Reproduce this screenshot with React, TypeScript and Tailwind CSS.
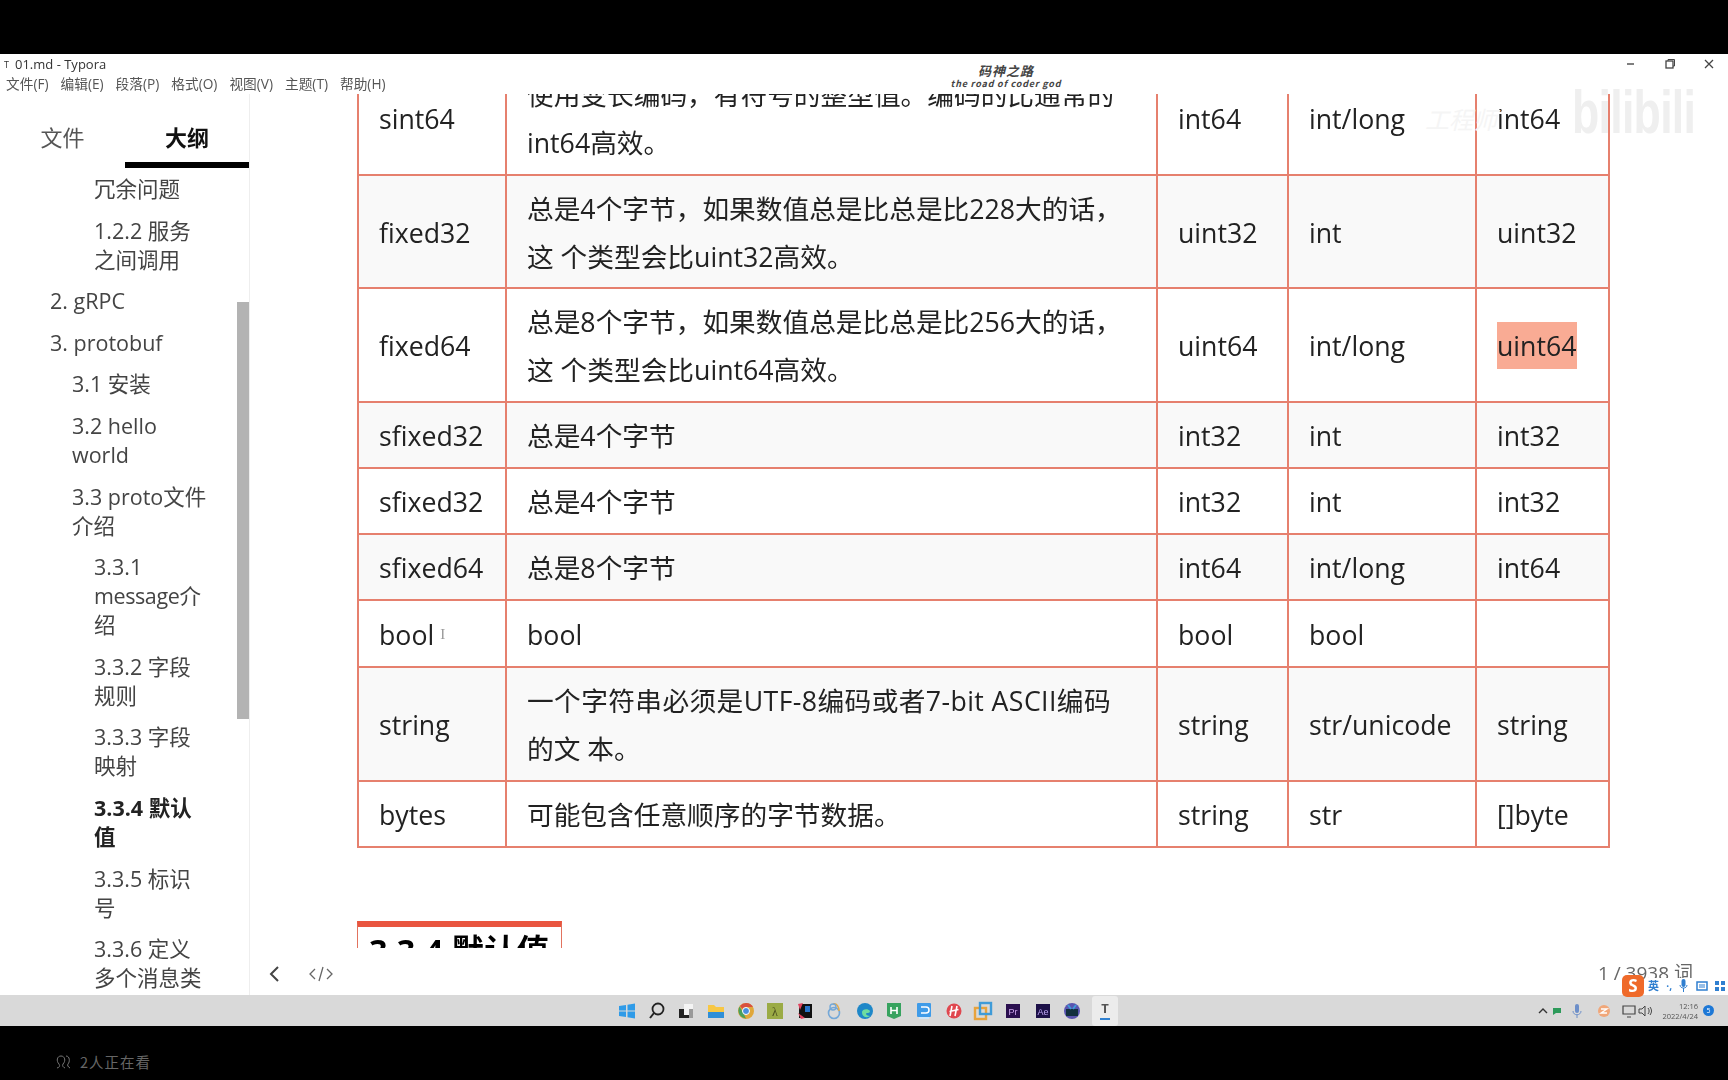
import React from "react";

const ff = "font-['Open_Sans','Noto_Sans_CJK_SC',sans-serif]";

type Row = { c: React.ReactNode[]; h: string };
const rows: Row[] = [
  { h: "h-[114px]", c: ["sint64", <>使用变长编码，有符号的整型值。编码的比通常的<br />int64高效。</>, "int64", "int/long", "int64"] },
  { h: "h-[113px]", c: ["fixed32", <>总是4个字节，如果数值总是比总是比228大的话，<br />这 个类型会比uint32高效。</>, "uint32", "int", "uint32"] },
  { h: "h-[114px]", c: ["fixed64", <>总是8个字节，如果数值总是比总是比256大的话，<br />这 个类型会比uint64高效。</>, "uint64", "int/long", <span className="inline-block bg-[#f9ab94] leading-[47px]">uint64</span>] },
  { h: "h-[66px]", c: ["sfixed32", "总是4个字节", "int32", "int", "int32"] },
  { h: "h-[66px]", c: ["sfixed32", "总是4个字节", "int32", "int", "int32"] },
  { h: "h-[66px]", c: ["sfixed64", "总是8个字节", "int64", "int/long", "int64"] },
  { h: "h-[67px]", c: ["bool", "bool", "bool", "bool", ""] },
  { h: "h-[114px]", c: ["string", <><span className="tracking-[0.4px]">一个字符串必须是UTF-8编码或者7-bit ASCII编码</span><br />的文 本。</>, "string", "str/unicode", "string"] },
  { h: "h-[66px]", c: ["bytes", "可能包含任意顺序的字节数据。", "string", "str", "[]byte"] },
];

const outline: { t: React.ReactNode; pl: string; bold?: boolean }[] = [
  { t: "冗余问题", pl: "pl-[94px]" },
  { t: <>1.2.2 服务<br />之间调用</>, pl: "pl-[94px]" },
  { t: "2. gRPC", pl: "pl-[50px]" },
  { t: "3. protobuf", pl: "pl-[50px]" },
  { t: "3.1 安装", pl: "pl-[72px]" },
  { t: <>3.2 hello<br />world</>, pl: "pl-[72px]" },
  { t: <>3.3 proto文件<br />介绍</>, pl: "pl-[72px]" },
  { t: <>3.3.1<br /><span className="tracking-[-0.4px]">message</span>介<br />绍</>, pl: "pl-[94px]" },
  { t: <>3.3.2 字段<br />规则</>, pl: "pl-[94px]" },
  { t: <>3.3.3 字段<br />映射</>, pl: "pl-[94px]" },
  { t: <>3.3.4 默认<br />值</>, pl: "pl-[94px]", bold: true },
  { t: <>3.3.5 标识<br />号</>, pl: "pl-[94px]" },
  { t: <>3.3.6 定义<br />多个消息类</>, pl: "pl-[94px]" },
];

const menu = ["文件(F)", "编辑(E)", "段落(P)", "格式(O)", "视图(V)", "主题(T)", "帮助(H)"];

const Ico = ({ children }: { children: React.ReactNode }) => (
  <svg width="20" height="20" viewBox="0 0 20 20" className="shrink-0">{children}</svg>
);

const taskIcons: React.ReactNode[] = [
  <Ico key="win"><path d="M2 5l7-1v5.5H2zM10.500 3.800L18 2.500v7h-7.500zM2 10.500h7V16l-7-1zM10.500 10.500H18v7l-7.500-1.200z" fill="#2f9be8" /></Ico>,
  <Ico key="search"><circle cx="11" cy="8" r="5.500" fill="none" stroke="#222" strokeWidth="1.800" /><path d="M7 12l-4 5" stroke="#222" strokeWidth="2" /></Ico>,
  <Ico key="view"><rect x="3" y="8" width="10" height="9" fill="#222" /><rect x="8" y="3" width="9" height="11" fill="#f4f4f4" /><rect x="13" y="8" width="4" height="9" fill="#999" /></Ico>,
  <Ico key="files"><path d="M2 4h6l2 2h8v11H2z" fill="#f7c744" /><rect x="2" y="11" width="16" height="6" fill="#2f8fd8" /></Ico>,
  <Ico key="chrome"><circle cx="10" cy="10" r="8" fill="#e0a73a" /><path d="M10 2a8 8 0 0 1 7 4h-7a4 4 0 0 0-3.500 2L4 5a8 8 0 0 1 6-3z" fill="#d9503f" /><path d="M3.500 5.500l3.500 6 3 6a8 8 0 0 1-6.500-12z" fill="#4aa05a" /><circle cx="10" cy="10" r="3.500" fill="#4b8fdd" stroke="#fff" /></Ico>,
  <Ico key="lambda"><rect x="2" y="2" width="16" height="16" fill="#9bab45" /><text x="10" y="15" textAnchor="middle" fontSize="12" fill="#4b4f1e" fontFamily="Liberation Serif">λ</text></Ico>,
  <Ico key="idea"><rect x="4" y="3" width="13" height="14" fill="#111" /><path d="M3 3l5-1-3 7zM3 12l3 6 4-1z" fill="#e0425f" /><rect x="10" y="5" width="5" height="6" fill="#2673c9" /></Ico>,
  <Ico key="feather"><circle cx="9" cy="12" r="5.500" fill="none" stroke="#74a8d8" strokeWidth="1.600" /><path d="M8 3c4-1 6 3 6 7" fill="none" stroke="#e0a94f" strokeWidth="1.600" /><circle cx="8" cy="6" r="3" fill="none" stroke="#74a8d8" strokeWidth="1.400" /></Ico>,
  <Ico key="edge"><circle cx="10" cy="10" r="8" fill="#1e87c8" /><path d="M7 11c0-3 6-4 8-1 0 2-2 2-3 2-2 0-1 3 3 3-2 2-8 2-8-4z" fill="#6fdc9f" /></Ico>,
  <Ico key="hb"><path d="M3 2h14v13l-7 3-7-3z" fill="#37a35f" /><path d="M7 6v7M13 6v7M7 9.500h6" stroke="#fff" strokeWidth="1.600" /></Ico>,
  <Ico key="doc"><rect x="3" y="2" width="14" height="14" rx="1" fill="#3f9be8" /><path d="M7 6h5a3 3 0 0 1 0 6H7" fill="none" stroke="#fff" strokeWidth="1.500" /><rect x="5" y="16" width="10" height="2" fill="#cfe6f8" /></Ico>,
  <Ico key="red"><circle cx="10" cy="10" r="7.500" fill="#e0474f" /><path d="M8 5l-2 10M13 5l-2 10M5.500 10.500l9-2" stroke="#fff" strokeWidth="1.600" /></Ico>,
  <Ico key="copy"><rect x="2" y="7" width="11" height="11" fill="none" stroke="#e8a33d" strokeWidth="2.400" /><rect x="7" y="2" width="11" height="11" fill="none" stroke="#3f9bd8" strokeWidth="2.400" /></Ico>,
  <Ico key="pr"><rect x="3" y="3" width="14" height="14" fill="#2a0f4f" /><text x="10" y="14" textAnchor="middle" fontSize="9" fill="#d0a6f0" fontFamily="Liberation Sans">Pr</text></Ico>,
  <Ico key="ae"><rect x="3" y="3" width="14" height="14" fill="#1c1048" /><text x="10" y="14" textAnchor="middle" fontSize="9" fill="#bfa6f5" fontFamily="Liberation Sans">Ae</text></Ico>,
  <Ico key="go"><circle cx="10" cy="10" r="8" fill="#5a55b0" /><rect x="4" y="8" width="12" height="7" fill="#12303f" /><path d="M6 4l3 4M14 4l-3 4" stroke="#3f9bd8" strokeWidth="2" /></Ico>,
];

export default function App() {
  return (
    <div className={`relative flex h-[1080px] w-[1728px] flex-col overflow-hidden bg-black ${ff}`}>
      <div className="h-[54px] shrink-0 bg-black" />

      <div className="flex h-[941px] shrink-0 flex-col bg-white blur-[0.5px]">
        <div className="flex h-[20px] shrink-0 items-center text-[#333]">
          <span className="w-[15px] pl-[4px] text-[9px] leading-none">T</span>
          <span className="text-[13px] font-medium leading-none">01.md - Typora</span>
          <div className="ml-auto flex items-center gap-[23.500px] pr-[11px]">
            <svg width="16" height="12" viewBox="0 0 16 12"><path d="M5 6h7" stroke="#555" strokeWidth="1.500" /></svg>
            <svg width="16" height="12" viewBox="0 0 16 12"><rect x="4" y="3" width="7" height="7" fill="none" stroke="#444" strokeWidth="1.300" /><path d="M6 3V1.500h6.500V8H11" fill="none" stroke="#444" /></svg>
            <svg width="16" height="12" viewBox="0 0 16 12"><path d="M4 2l8 8M12 2l-8 8" stroke="#444" strokeWidth="1.300" /></svg>
          </div>
        </div>
        <div className="flex h-[20px] shrink-0 items-center gap-[12px] pl-[6px] text-[13.700px] text-[#555]">
          {menu.map((m) => (
            <span key={m} className="leading-none">{m}</span>
          ))}
        </div>

        <div className="flex h-[901px] shrink-0">
          <aside className="relative h-full w-[250px] shrink-0 overflow-hidden border-r border-[#eeeeee]">
            <div className="flex h-[74px] text-[22px]">
              <div className="flex w-[125px] items-center justify-center pt-[12px] text-[#555]">文件</div>
              <div className="flex w-[124px] items-center justify-center border-b-[6px] border-black pt-[18px] font-bold text-[#111]">大纲</div>
            </div>
            <div className="flex flex-col gap-[12.600px] pt-[6px] text-[21.500px] leading-[29px] text-[#444]">
              {outline.map((o, i) => (
                <div key={i} className={`${o.pl} ${o.bold ? "font-bold text-[#222]" : ""}`}>{o.t}</div>
              ))}
            </div>
            <div className="absolute left-[237px] top-[208px] h-[417px] w-[12px] bg-[#b3b3b3]" />
          </aside>

          <main className="relative flex min-w-0 flex-1 flex-col">
            <div className="h-[854px] shrink-0 overflow-hidden pl-[107px]">
              <table className="mt-[-34px] w-[1251px] table-fixed border-collapse text-[26.700px] text-[#222]">
                <colgroup>
                  <col className="w-[148px]" />
                  <col className="w-[651px]" />
                  <col className="w-[131px]" />
                  <col className="w-[188px]" />
                  <col className="w-[133px]" />
                </colgroup>
                <tbody>
                  {rows.map((r, i) => (
                    <tr key={i} className={`${r.h} ${i % 2 === 1 ? "bg-[#f9f9f9]" : "bg-white"}`}>
                      {r.c.map((c, j) => (
                        <td key={j} className="whitespace-nowrap border-2 border-[#e6806e] px-[20px] pt-[2px] align-middle leading-[48px]">
                          {c}
                          {i === 6 && j === 0 ? <span className="relative top-[-6px] ml-[6px] font-['Liberation_Serif',serif] text-[15px] leading-none text-[#999]">I</span> : null}
                        </td>
                      ))}
                    </tr>
                  ))}
                </tbody>
              </table>
              <h3 className="mt-[73px] flex h-[40px] w-[205px] items-start border-x border-t-[6px] border-x-[#e2735f] border-t-[#e9553f] pl-[11px] pt-[4px] text-[32.500px] font-bold leading-[40px] text-black">
                3.3.4 默认值
              </h3>
            </div>
            <div className="flex h-[47px] shrink-0 items-center pl-[16px] pt-[4px] text-[#555]">
              <svg width="18" height="20" viewBox="0 0 18 20"><path d="M12 3L5 10l7 7" fill="none" stroke="#444" strokeWidth="2" /></svg>
              <svg className="ml-[24px]" width="26" height="20" viewBox="0 0 26 20"><path d="M7 5l-5 5 5 5M19 5l5 5-5 5M15 3l-4 14" fill="none" stroke="#666" strokeWidth="1.300" /></svg>
              <span className="ml-auto pr-[35px] text-[19px] text-[#666]">1 / 3938 词</span>
            </div>
          </main>
        </div>
      </div>

      <div className="relative flex h-[31px] shrink-0 items-center bg-[#d9d9d9] blur-[0.4px]">
        <div className="absolute left-[617px] top-0 flex h-full items-center gap-[9.700px]">
          {taskIcons.map((ic) => ic)}
          <div className="flex h-[30px] w-[26px] flex-col items-center justify-center rounded-[3px] bg-[#ececec]">
            <span className="text-[13px] font-bold leading-none text-[#555]">T</span>
            <div className="mt-[3px] h-[2px] w-[10px] bg-[#2f80d0]" />
          </div>
        </div>
        <div className="ml-auto flex items-center pr-[14px] text-[#444]">
          <svg width="14" height="14" viewBox="0 0 14 14"><path d="M3 9l4-4 4 4" fill="none" stroke="#333" strokeWidth="1.400" /></svg>
          <svg className="ml-[1px]" width="12" height="12" viewBox="0 0 12 12"><path d="M2 3h8v5H5L2 10z" fill="#2d9a5a" /></svg>
          <svg className="ml-[8px]" width="12" height="16" viewBox="0 0 12 16"><rect x="4" y="1" width="4" height="9" rx="2" fill="#6d8fc9" /><path d="M2 8c0 5 8 5 8 0M6 12v3" fill="none" stroke="#6d8fc9" /></svg>
          <svg className="ml-[14px]" width="14" height="14" viewBox="0 0 14 14"><circle cx="7" cy="7" r="6" fill="#f0a77a" /><path d="M4 5h6L4 9h6" fill="none" stroke="#fff" strokeWidth="1.300" /></svg>
          <svg className="ml-[10px]" width="16" height="14" viewBox="0 0 16 14"><path d="M2 2h12v8H2zM6 13h4" fill="none" stroke="#444" strokeWidth="1.200" /></svg>
          <svg width="16" height="14" viewBox="0 0 16 14"><path d="M2 5h3l3-3v10L5 9H2z" fill="none" stroke="#444" /><path d="M11 4c1.500 2 1.500 4 0 6M13 3c2 3 2 5 0 8" fill="none" stroke="#444" /></svg>
          <div className="ml-[3px] flex w-[42px] flex-col items-end text-[7.500px] leading-[10px] text-[#555]">
            <span>12:16</span>
            <span>2022/4/24</span>
          </div>
          <div className="ml-[5px] flex h-[11px] w-[11px] items-center justify-center rounded-full bg-[#1d78d6] text-[7px] leading-none text-white">5</div>
        </div>
      </div>

      <div className="flex h-[54px] shrink-0 items-center pl-[54px] pt-[18px] text-[14.500px] text-[#666]">
        <svg width="18" height="16" viewBox="0 0 18 16" className="mr-[8px]"><path d="M3 14c3-1 3-2 2-4-3-3-2-8 2-8s5 5 2 8c-1 2 0 3 2 4M12 2c4 0 4 6 2 8-1 1 0 3 2 4" fill="none" stroke="#777" /></svg>
        <span className="font-['Noto_Sans_CJK_SC',sans-serif] tracking-[1px]">2人正在看</span>
      </div>

      {/* video watermarks over the frame */}
      <div className="pointer-events-none absolute left-[946px] top-[63px] flex w-[120px] flex-col items-center font-['Noto_Sans_CJK_SC',sans-serif] text-[#444]">
        <span className="text-[13px] font-bold italic leading-[15px] tracking-[1px]">码神之路</span>
        <span className="whitespace-nowrap text-[9px] font-bold italic leading-[12px] tracking-[0.8px]">the road of coder god</span>
      </div>
      <div className="pointer-events-none absolute left-[1572px] top-[80px] origin-left scale-x-[0.72] font-['Liberation_Sans',sans-serif] text-[62px] font-bold leading-[64px] tracking-[-1px] text-[#efefef]">
        bilibili
      </div>
      <div className="pointer-events-none absolute left-[1425px] top-[105px] text-[24px] italic leading-[30px] text-[#f5f5f5]">工程师</div>

      <div className="pointer-events-none absolute left-[1622px] top-[974px] flex h-[23px] w-[104px] items-center blur-[0.4px]">
        <div className="flex h-[22px] w-[22px] items-center justify-center rounded-[5px] bg-[#ef6a2a] text-[17px] font-bold leading-none text-white">S</div>
        <div className="ml-[1px] flex h-[16px] flex-1 items-center justify-between bg-white pl-[3px] pr-[1px]">
          <span className="text-[11px] font-bold leading-none text-[#2f7fd0]">英</span>
          <span className="text-[10px] font-bold leading-none text-[#2f7fd0]">·,</span>
          <svg width="9" height="13" viewBox="0 0 9 13"><rect x="2.500" y="0" width="4" height="8" rx="2" fill="#2f7fd0" /><path d="M1 6c0 4 7 4 7 0M4.500 9v4" fill="none" stroke="#2f7fd0" /></svg>
          <svg width="12" height="10" viewBox="0 0 12 10"><rect x="1" y="1" width="10" height="8" fill="none" stroke="#2f7fd0" strokeWidth="1.500" /><path d="M3 4h6M3 6h6" stroke="#2f7fd0" /></svg>
          <svg width="10" height="10" viewBox="0 0 10 10"><rect width="4" height="4" fill="#2f7fd0" /><rect x="6" width="4" height="4" fill="#2f7fd0" /><rect y="6" width="4" height="4" fill="#2f7fd0" /><rect x="6" y="6" width="4" height="4" fill="#2f7fd0" /></svg>
        </div>
      </div>
    </div>
  );
}
